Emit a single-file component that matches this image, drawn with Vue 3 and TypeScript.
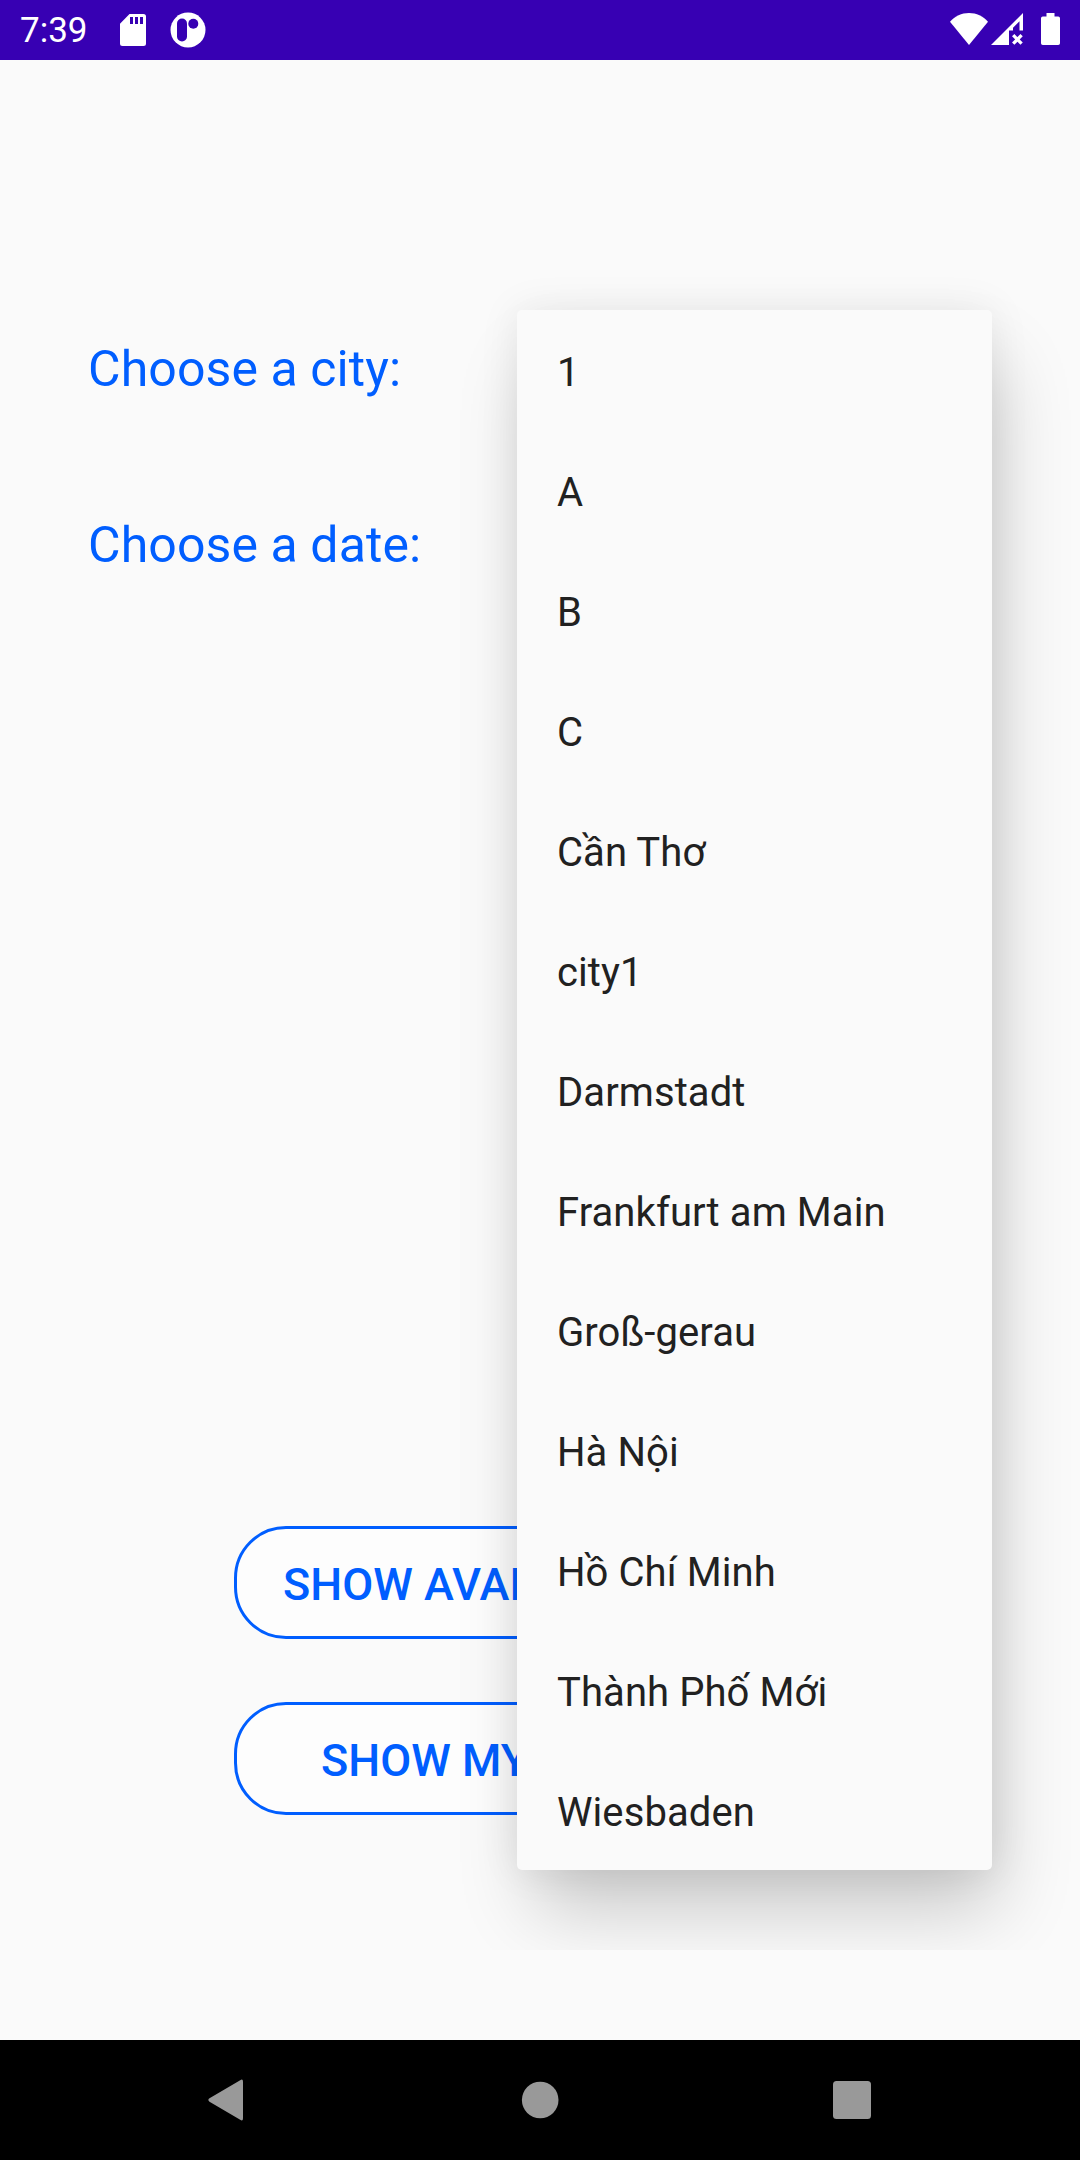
<script setup lang="ts">
const cities: string[] = [
  '1',
  'A',
  'B',
  'C',
  'Cần Thơ',
  'city1',
  'Darmstadt',
  'Frankfurt am Main',
  'Groß-gerau',
  'Hà Nội',
  'Hồ Chí Minh',
  'Thành Phố Mới',
  'Wiesbaden',
]
</script>

<template>
  <div class="screen">
    <header class="status">
      <span class="clock">7:39</span>
      <svg class="sd" width="26" height="32" viewBox="0 0 26 32">
        <path
          fill="#fff"
          fill-rule="evenodd"
          d="M9.5 0H23.5Q26 0 26 2.5V29.500Q26 32 23.500 32H2.500Q0 32 0 29.500V9.800ZM10 3V10H13V3ZM15 3V10H18V3ZM20 3V10H23V3Z"
        />
      </svg>
      <svg class="badge" width="36" height="36" viewBox="0 0 36 36">
        <circle cx="18" cy="18" r="17.500" fill="#fff" />
        <rect x="7" y="6.500" width="10" height="23" rx="5" fill="#3700b3" />
        <circle cx="23.300" cy="11.700" r="5" fill="#3700b3" />
      </svg>
      <div class="indicators">
        <svg class="wifi" width="38" height="32" viewBox="0 0 38 32">
          <path fill="#fff" d="M19 32L0 8.800C5 3.200 11.500 0 19 0S33 3.200 38 8.800Z" />
        </svg>
        <svg class="signal" width="32" height="32" viewBox="0 0 32 32">
          <path fill="#fff" d="M32 0V17.500H28.500V8.300L22 14.700V17.500H18V32H0Z" />
          <path d="M22.200 22.200L30.600 30.600M30.600 22.200L22.200 30.600" stroke="#fff" stroke-width="3.300" />
        </svg>
        <svg class="battery" width="19" height="32" viewBox="0 0 19 32">
          <path
            fill="#fff"
            d="M5.500 0H13.500V3.500H17.200Q19 3.500 19 5.300V30.200Q19 32 17.200 32H1.800Q0 32 0 30.200V5.300Q0 3.500 1.800 3.500H5.500Z"
          />
        </svg>
      </div>
    </header>

    <main class="content">
      <div class="labels">
        <label>Choose a city:</label>
        <label>Choose a date:</label>
      </div>
      <div class="actions">
        <button class="available" type="button">SHOW AVAI</button>
        <button class="mine" type="button">SHOW MY</button>
      </div>
      <div class="overlay">
        <ul class="dropdown">
          <li v-for="city in cities" :key="city">{{ city }}</li>
        </ul>
      </div>
    </main>

    <nav class="navbar">
      <svg width="38" height="42" viewBox="0 0 38 42">
        <path
          fill="#999"
          d="M32.200 1.200Q35 -0.700 35 2.800V39.200Q35 42.700 32.200 40.800L1.500 22.700Q-0.800 21 1.500 19.300Z"
        />
      </svg>
      <svg width="38" height="38" viewBox="0 0 38 38">
        <circle cx="19.200" cy="19" r="18.300" fill="#999" />
      </svg>
      <svg width="38" height="38" viewBox="0 0 38 38">
        <rect width="38" height="38" rx="3.500" fill="#999" />
      </svg>
    </nav>
  </div>
</template>

<style>
body {
  margin: 0;
}
</style>

<style scoped>
.screen {
  display: flex;
  flex-direction: column;
  width: 1080px;
  height: 2160px;
  overflow: hidden;
  background: #fafafa;
  font-family: Roboto, sans-serif;
}
.status {
  display: flex;
  align-items: flex-start;
  box-sizing: border-box;
  height: 60px;
  flex: none;
  padding: 0 20px;
  background: #3700b3;
  color: #fff;
}
.clock {
  width: 100px;
  font-size: 35px;
  line-height: 62px;
}
.sd {
  margin-top: 14px;
}
.badge {
  margin: 12px 0 0 24px;
}
.indicators {
  display: flex;
  margin: 13px 0 0 auto;
}
.signal {
  margin-left: 3px;
}
.battery {
  margin-left: 18px;
}
.content {
  position: relative;
  display: flex;
  flex-direction: column;
  flex: 1;
}
.labels {
  display: flex;
  flex-direction: column;
  gap: 106px;
  padding: 274px 88px 0;
}
.labels label {
  height: 70px;
  font-size: 50px;
  line-height: 70px;
  letter-spacing: 0.1px;
  color: #005eff;
}
.actions {
  display: flex;
  flex-direction: column;
  align-items: center;
  gap: 63px;
  margin-top: 946px;
}
.actions button {
  box-sizing: border-box;
  width: 612px;
  height: 113px;
  padding: 4px 0 0;
  border: 3px solid #005eff;
  border-radius: 52px;
  background: #fdfdfd;
  color: #005eff;
  font: 500 45px/1 Roboto, sans-serif;
  text-align: left;
  white-space: nowrap;
}
.actions .available {
  padding-left: 46px;
}
.actions .mine {
  padding-left: 84px;
}
.overlay {
  position: absolute;
  inset: 0 0 auto;
  height: 1890px;
  overflow: hidden;
}
.dropdown {
  width: 475px;
  margin: 250px 0 0 517px;
  padding: 0;
  border-radius: 5px;
  background: #fafafa;
  box-shadow:
    0 0 40px rgba(0, 0, 0, 0.08),
    11px 46px 72px -7px rgba(0, 0, 0, 0.2);
  list-style: none;
}
.dropdown li {
  box-sizing: border-box;
  height: 120px;
  padding: 3px 40px 0;
  font-size: 40px;
  line-height: 120px;
  letter-spacing: 0.08px;
  color: #212121;
  white-space: nowrap;
}
.navbar {
  display: flex;
  align-items: center;
  justify-content: space-between;
  box-sizing: border-box;
  height: 120px;
  flex: none;
  padding: 0 209px 0 208px;
  background: #000;
}
</style>
